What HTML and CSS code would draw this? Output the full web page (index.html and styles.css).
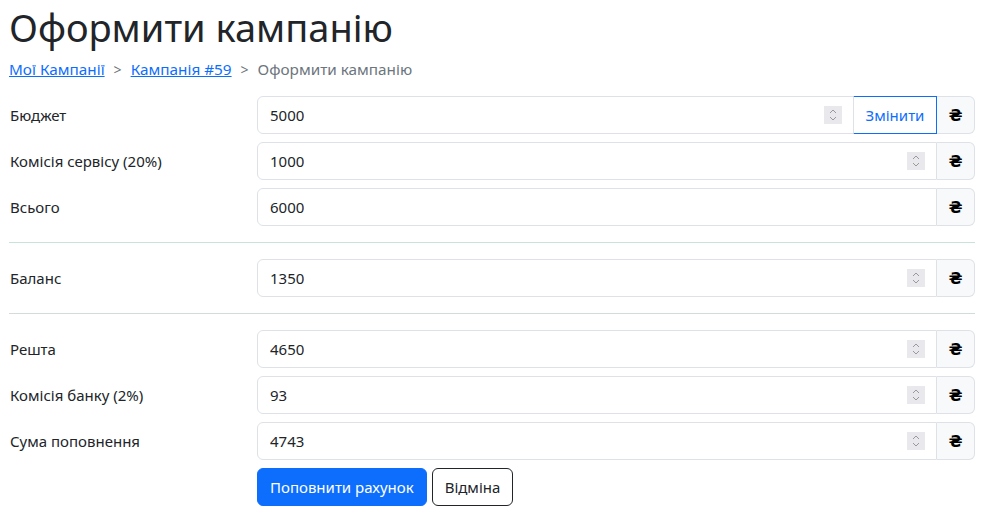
FILE: index.html
```html
<!DOCTYPE html>
<html lang="uk">
  <head>
    <meta charset="UTF-8" />
    <meta name="viewport" content="width=device-width, initial-scale=1.0" />
    <title>Оформити кампанію</title>
    <link rel="stylesheet" href="styles.css">
  </head>
  <body>
    <div class="page">
      <h1>Оформити кампанію</h1>
      <nav class="breadcrumb">
        <a href="#">Мої Кампанії</a>
        <span class="sep">&gt;</span>
        <a href="#">Кампанія #59</a>
        <span class="sep">&gt;</span>
        <span class="active">Оформити кампанію</span>
      </nav>

      <form class="checkout">
        <div class="row">
          <label>Бюджет</label>
          <div class="group">
            <div class="field">
              <input class="control" type="text" value="5000">
              <span class="spin"></span>
            </div>
            <button type="button" class="btn-change">Змінити</button>
            <span class="addon">₴</span>
          </div>
        </div>
        <div class="row">
          <label>Комісія сервісу (20%)</label>
          <div class="group">
            <div class="field">
              <input class="control" type="text" value="1000">
              <span class="spin"></span>
            </div>
            <span class="addon">₴</span>
          </div>
        </div>
        <div class="row">
          <label>Всього</label>
          <div class="group">
            <div class="field">
              <input class="control" type="text" value="6000">
            </div>
            <span class="addon">₴</span>
          </div>
        </div>

        <hr class="divider">

        <div class="row">
          <label>Баланс</label>
          <div class="group">
            <div class="field">
              <input class="control" type="text" value="1350">
              <span class="spin"></span>
            </div>
            <span class="addon">₴</span>
          </div>
        </div>

        <hr class="divider alt">

        <div class="row">
          <label>Решта</label>
          <div class="group">
            <div class="field">
              <input class="control" type="text" value="4650">
              <span class="spin"></span>
            </div>
            <span class="addon">₴</span>
          </div>
        </div>
        <div class="row">
          <label>Комісія банку (2%)</label>
          <div class="group">
            <div class="field">
              <input class="control" type="text" value="93">
              <span class="spin"></span>
            </div>
            <span class="addon">₴</span>
          </div>
        </div>
        <div class="row">
          <label>Сума поповнення</label>
          <div class="group">
            <div class="field">
              <input class="control" type="text" value="4743">
              <span class="spin"></span>
            </div>
            <span class="addon">₴</span>
          </div>
        </div>

        <div class="row actions">
          <span></span>
          <div class="buttons">
            <button type="button" class="btn btn-primary">Поповнити рахунок</button>
            <button type="button" class="btn btn-outline">Відміна</button>
          </div>
        </div>
      </form>
    </div>
  </body>
</html>
```

FILE: styles.css
```css
* {
  box-sizing: border-box;
}

body {
  margin: 0;
  padding: 0;
  font-family: "Noto Sans", "DejaVu Sans", sans-serif;
  font-size: 15px;
  color: #212529;
  background-color: #fff;
}

.page {
  width: 975px;
  padding-left: 9px;
}

h1 {
  margin: 0;
  font-size: 38px;
  font-weight: 400;
  line-height: 54px;
}

.breadcrumb {
  display: flex;
  align-items: center;
  gap: 9px;
  height: 30px;
  margin-bottom: 12px;
  color: #6c757d;
  font-size: 15.3px;
}

.breadcrumb a {
  color: #0d6efd;
  text-decoration: underline;
}

.breadcrumb .sep {
  font-size: 14px;
}

.row {
  display: grid;
  grid-template-columns: 248px 1fr;
  align-items: center;
  margin-bottom: 8px;
}

.row label {
  padding-left: 1px;
}

.group {
  display: flex;
  height: 38px;
}

.field {
  position: relative;
  flex: 1;
  display: flex;
}

.control {
  flex: 1;
  min-width: 0;
  border: 1px solid #dee2e6;
  border-radius: 6px 0 0 6px;
  padding: 0 12px;
  font: inherit;
  color: #212529;
  outline: none;
}

/* fake number spinner */
.spin {
  position: absolute;
  right: 12px;
  top: 10px;
  width: 18px;
  height: 18px;
  background-color: #e9e9ed;
  background-image: url("data:image/svg+xml,%3Csvg xmlns='http://www.w3.org/2000/svg' width='18' height='18'%3E%3Cpath d='M6 7l3-3 3 3M6 11l3 3 3-3' fill='none' stroke='%23999' stroke-width='1'/%3E%3C/svg%3E");
}

.btn-change {
  width: 84px;
  border: 1px solid #0d6efd;
  background: #fff;
  color: #0d6efd;
  font: inherit;
  padding: 0;
  margin-left: -1px;
}

.addon {
  width: 38px;
  display: flex;
  justify-content: center;
  align-items: center;
  background-color: #f8f9fa;
  border: 1px solid #dee2e6;
  border-left: none;
  border-radius: 0 6px 6px 0;
  font-family: "DejaVu Sans", sans-serif;
  font-size: 16px;
  font-weight: bold;
  color: #000;
}

.divider {
  margin: 16px 0 16px;
  border: none;
  border-top: 1px solid #c8e3da;
}

.divider.alt {
  border-top-color: #d2dcd8;
}

.buttons {
  display: flex;
  gap: 5px;
}

.btn {
  height: 38px;
  padding: 0 12px;
  border-radius: 6px;
  font: inherit;
  cursor: pointer;
}

.btn-primary {
  background-color: #0d6efd;
  border: 1px solid #0d6efd;
  color: #fff;
}

.btn-outline {
  background-color: #fff;
  border: 1px solid #212529;
  color: #212529;
}
```
